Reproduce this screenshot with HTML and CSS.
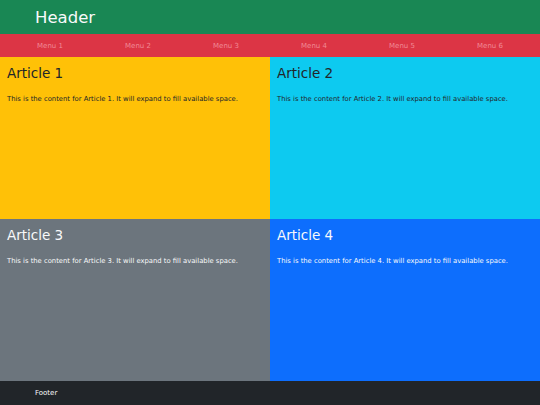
FILE: index.html
```html
<!DOCTYPE html>
<html>
<head>
<meta charset="utf-8">
<link rel="stylesheet" href="styles.css">
</head>
<body>
<div class="page">
  <header class="header"><h1 class="header-title">Header</h1></header>
  <nav class="menu">
    <a class="menu-item">Menu 1</a>
    <a class="menu-item">Menu 2</a>
    <a class="menu-item">Menu 3</a>
    <a class="menu-item">Menu 4</a>
    <a class="menu-item">Menu 5</a>
    <a class="menu-item">Menu 6</a>
  </nav>
  <main class="grid">
    <article class="card warning"><h2 class="card-title">Article 1</h2><p class="card-text">This is the content for Article 1. It will expand to fill available space.</p></article>
    <article class="card info"><h2 class="card-title">Article 2</h2><p class="card-text">This is the content for Article 2. It will expand to fill available space.</p></article>
    <article class="card secondary"><h2 class="card-title">Article 3</h2><p class="card-text">This is the content for Article 3. It will expand to fill available space.</p></article>
    <article class="card primary"><h2 class="card-title">Article 4</h2><p class="card-text">This is the content for Article 4. It will expand to fill available space.</p></article>
  </main>
  <footer class="footer">Footer</footer>
</div>
</body>
</html>
```
FILE: styles.css
```css
* { box-sizing: border-box; }
html, body { margin: 0; padding: 0; }
body { font-family: "DejaVu Sans", Verdana, sans-serif; }
.page { display: flex; flex-direction: column; width: 540px; height: 405px; }
.header { background: #198754; height: 34px; display: flex; align-items: center; padding-left: 35px; }
.header-title { margin: 0; font-size: 16.5px; font-weight: normal; color: #f8f9fa; }
.menu { background: #dc3545; height: 23px; display: grid; grid-template-columns: repeat(6, 1fr); padding: 0 6px; align-items: center; }
.menu-item { text-align: center; font-size: 7px; color: #f08a95; }
.grid { flex: 1; display: grid; grid-template-columns: 1fr 1fr; grid-template-rows: 1fr 1fr; }
.card { padding: 7px; }
.card-title { margin: 0; font-size: 13.5px; font-weight: normal; line-height: 18px; }
.card-text { margin: 13px 0 0; font-size: 6.8px; }
.warning { background: #ffc107; color: #212529; }
.info { background: #0dcaf0; color: #212529; }
.secondary { background: #6c757d; color: #f8f9fa; }
.primary { background: #0d6efd; color: #f8f9fa; }
.footer { background: #212529; color: #f8f9fa; height: 24px; display: flex; align-items: center; padding-left: 35px; font-size: 7px; }
```
